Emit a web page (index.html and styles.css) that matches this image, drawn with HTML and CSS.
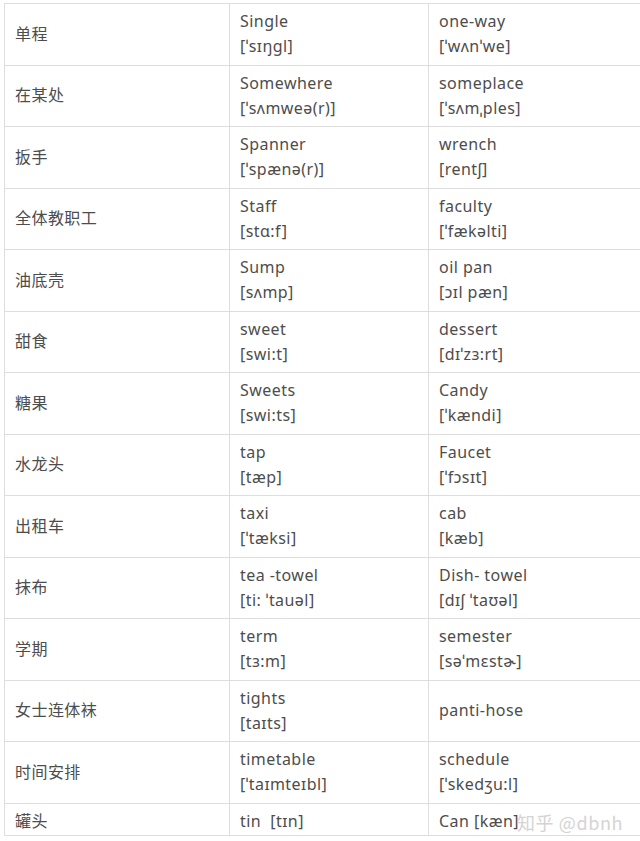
FILE: index.html
```html
<!DOCTYPE html>
<html lang="zh">
<head>
<meta charset="utf-8">
<title>词汇对照表</title>
<link rel="stylesheet" href="styles.css">
</head>
<body>
<div class="wrap">
<table class="vocab">
<colgroup><col class="c1"><col class="c2"><col class="c3"></colgroup>
<tbody>
<tr><td>单程</td><td>Single<br>[ˈsɪŋgl]</td><td>one-way<br>[ˈwʌnˈwe]</td></tr>
<tr><td>在某处</td><td>Somewhere<br>[ˈsʌmweə(r)]</td><td>someplace<br>[ˈsʌmˌples]</td></tr>
<tr><td>扳手</td><td>Spanner<br>[ˈspænə(r)]</td><td>wrench<br>[rentʃ]</td></tr>
<tr><td>全体教职工</td><td>Staff<br>[stɑ:f]</td><td>faculty<br>[ˈfækəlti]</td></tr>
<tr><td>油底壳</td><td>Sump<br>[sʌmp]</td><td>oil pan<br>[ɔɪl pæn]</td></tr>
<tr><td>甜食</td><td>sweet<br>[swi:t]</td><td>dessert<br>[dɪˈzɜ:rt]</td></tr>
<tr><td>糖果</td><td>Sweets<br>[swi:ts]</td><td>Candy<br>[ˈkændi]</td></tr>
<tr><td>水龙头</td><td>tap<br>[tæp]</td><td>Faucet<br>[ˈfɔsɪt]</td></tr>
<tr><td>出租车</td><td>taxi<br>[ˈtæksi]</td><td>cab<br>[kæb]</td></tr>
<tr><td>抹布</td><td>tea -towel<br>[ti: ˈtauəl]</td><td>Dish- towel<br>[dɪʃ ˈtaʊəl]</td></tr>
<tr><td>学期</td><td>term<br>[tɜ:m]</td><td>semester<br>[səˈmɛstɚ]</td></tr>
<tr><td>女士连体袜</td><td>tights<br>[taɪts]</td><td>panti-hose</td></tr>
<tr><td>时间安排</td><td>timetable<br>[ˈtaɪmteɪbl]</td><td>schedule<br>[ˈskedʒu:l]</td></tr>
<tr class="short"><td>罐头</td><td>tin&nbsp; [tɪn]</td><td>Can [kæn]</td></tr>
</tbody>
</table>
<div class="watermark">知乎 @dbnh</div>
</div>
</body>
</html>
```
FILE: styles.css
```css
html, body {
  margin: 0;
  padding: 0;
  background: #ffffff;
}
body {
  overflow: hidden;
  width: 640px;
  height: 841px;
}
.wrap {
  position: relative;
  padding: 3px 0 0 4px;
}
.vocab {
  border-collapse: collapse;
  table-layout: fixed;
  width: 660px;
  font-family: "Noto Sans", "Noto Sans CJK SC", sans-serif;
  font-size: 16px;
  letter-spacing: 0.45px;
  color: #4d4d4d;
}
.c1 { width: 225px; }
.c2 { width: 199px; }
.c3 { width: 236px; }
.vocab td {
  border: 1px solid #dedede;
  padding: 5.25px 10px;
  line-height: 25px;
  vertical-align: middle;
  white-space: nowrap;
}
.vocab tr.short td {
  padding: 5px 10px 1px;
}
.watermark {
  position: absolute;
  left: 517px;
  top: 810px;
  font-family: "Noto Sans CJK SC", "Noto Sans", sans-serif;
  font-size: 18px;
  line-height: 24px;
  color: #d4d4d4;
  letter-spacing: 0.6px;
}
```
